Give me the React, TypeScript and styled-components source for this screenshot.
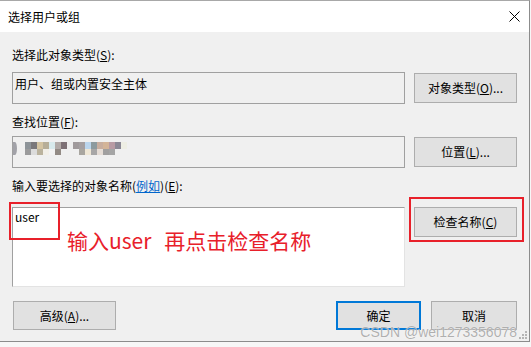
import styled, { createGlobalStyle } from "styled-components";

const GlobalStyle = createGlobalStyle`
  html, body {
    margin: 0;
    padding: 0;
    background: #f7f7f7;
  }
  body {
    font-family: "Noto Sans CJK SC", "Noto Sans", sans-serif;
    font-size: 12px;
    color: #000;
  }
`;

const mosaic = [
  ["#8e9499", "#7a787b", "#d4c4a2", "#b7ae98", "#d8eaec", "#b2aba8", "#7d7075", "#eeeeee", "#a09a9c", "#a5a0a2", "#bbd6ee", "#8c9a9e", "#c8ae9f", "#d3b498", "#b89ba4", "#8b8895", "#eeeee4"],
  ["#9b9b9c", "#dcdcdc", "#bbb39e", "#f2efe8", "#f3f3f3", "#938b85", "#f0f0f0", "#f0f0f0", "#f0f0f0", "#a9a6a0", "#efe7d6", "#a8a7a7", "#e6ddd6", "#a1a0a0", "#a5a5a5", "#f0f0f0", "#f0f0f0"],
];

export default function App() {
  return (
    <>
      <GlobalStyle />
      <Window>
        <TitleBar>
          <span>选择用户或组</span>
          <svg width="11" height="11" viewBox="0 0 11 11">
            <path d="M0.5 0.5 L10.5 10.5 M10.5 0.5 L0.5 10.5" stroke="#000" strokeWidth="1" />
          </svg>
        </TitleBar>
        <Body>
          <Label $gap={9}>
            选择此对象类型(<U>S</U>):
          </Label>
          <Row>
            <TextBox>用户、组或内置安全主体</TextBox>
            <Button>
              对象类型(<U>O</U>)...
            </Button>
          </Row>

          <Label $top={10} $gap={6}>
            查找位置(<U>F</U>):
          </Label>
          <Row>
            <TextBox>
              <Mosaic>
                <MosaicEdge />
                <MosaicGrid>
                  {mosaic.flat().map((c, i) => (
                    <span key={i} style={{ background: c }} />
                  ))}
                </MosaicGrid>
              </Mosaic>
            </TextBox>
            <Button>
              位置(<U>L</U>)...
            </Button>
          </Row>

          <Label $top={10} $gap={13}>
            输入要选择的对象名称(<Link>例如</Link>)(<U>E</U>):
          </Label>
          <Row $top>
            <NameBox>
              user
              <MarkBox $left={-4} $top={-6} $width={51} $height={38} />
              <Hint>
                输入user<HintGap />再点击检查名称
              </Hint>
            </NameBox>
            <Marked>
              <Button>
                检查名称(<U>C</U>)
              </Button>
              <MarkBox $left={-5} $top={-10} $width={115} $height={45} />
            </Marked>
          </Row>

          <Footer>
            <Button $width={103} $height={29} $offset={1}>
              高级(<U>A</U>)...
            </Button>
            <FooterRight>
              <Button $width={85} $height={29} $primary>
                确定
              </Button>
              <Button $width={86} $height={29}>
                取消
              </Button>
            </FooterRight>
          </Footer>
        </Body>
        <Watermark>CSDN @wei1273356078</Watermark>
        <Grip width="9" height="9" viewBox="0 0 9 9">
          {[
            [7, 1],
            [4, 4],
            [7, 4],
            [1, 7],
            [4, 7],
            [7, 7],
          ].map(([x, y]) => (
            <rect key={`${x}-${y}`} x={x} y={y} width="2" height="2" fill="#b4b4b4" />
          ))}
        </Grip>
      </Window>
    </>
  );
}

const Window = styled.div`
  position: relative;
  box-sizing: border-box;
  width: 530px;
  height: 342px;
  display: flex;
  flex-direction: column;
  background: #f0f0f0;
  border-top: 1px solid #a8a8a8;
  border-right: 1px solid #8c8c8c;
  border-bottom: 1px solid #8c8c8c;
`;

const TitleBar = styled.div`
  height: 31px;
  flex-shrink: 0;
  display: flex;
  align-items: center;
  justify-content: space-between;
  padding: 0 9px 0 8px;
  background: #fff;
  line-height: 16px;
`;

const Body = styled.div`
  flex: 1;
  padding: 15px 12px 0 12px;
  display: flex;
  flex-direction: column;
`;

const Label = styled.div<{ $top?: number; $gap: number }>`
  line-height: 16px;
  margin-top: ${(p) => p.$top ?? 0}px;
  margin-bottom: ${(p) => p.$gap}px;
`;

const U = styled.span`
  text-decoration: underline;
`;

const Link = styled.span`
  color: #0066cc;
  text-decoration: underline;
`;

const Row = styled.div<{ $top?: boolean }>`
  display: flex;
  gap: 9px;
  align-items: ${(p) => (p.$top ? "flex-start" : "center")};
`;

const TextBox = styled.div`
  box-sizing: border-box;
  width: 393px;
  height: 32px;
  padding: 3px 2px 0;
  line-height: 16px;
  background: #f0f0f0;
  border: 1px solid #a0a0a0;
`;

const Button = styled.div<{ $width?: number; $height?: number; $primary?: boolean; $offset?: number }>`
  box-sizing: border-box;
  width: ${(p) => p.$width ?? 103}px;
  height: ${(p) => p.$height ?? 30}px;
  margin-left: ${(p) => p.$offset ?? 0}px;
  display: flex;
  align-items: center;
  justify-content: center;
  line-height: 16px;
  background: #e1e1e1;
  border: ${(p) => (p.$primary ? "2px solid #0078d7" : "1px solid #adadad")};
`;

const Mosaic = styled.div`
  display: flex;
  align-items: flex-start;
  padding-top: 2px;
  margin-left: -2px;
`;

const MosaicEdge = styled.div`
  width: 4px;
  height: 13px;
  border-radius: 0 50% 50% 0 / 0 50% 50% 0;
  background: #a2a2a8;
`;

const MosaicGrid = styled.div`
  margin-left: 8px;
  display: grid;
  grid-template-columns: repeat(17, 6px);
  grid-auto-rows: 6.5px;
`;

const NameBox = styled.div`
  position: relative;
  box-sizing: border-box;
  width: 393px;
  height: 80px;
  padding: 1px 2px 0;
  line-height: 16px;
  background: #fff;
  border: 1px solid;
  border-color: #a0a0a0 #e3e3e3 #e3e3e3 #a0a0a0;
`;

const MarkBox = styled.div<{ $left: number; $top: number; $width: number; $height: number }>`
  position: absolute;
  box-sizing: border-box;
  left: ${(p) => p.$left}px;
  top: ${(p) => p.$top}px;
  width: ${(p) => p.$width}px;
  height: ${(p) => p.$height}px;
  border: 2px solid #e8202a;
  pointer-events: none;
`;

const Hint = styled.div`
  position: absolute;
  left: 54px;
  top: 19px;
  display: flex;
  align-items: center;
  font-size: 21px;
  line-height: 26px;
  color: #e8202a;
  white-space: nowrap;
`;

const HintGap = styled.span`
  width: 13px;
`;

const Marked = styled.div`
  position: relative;
`;

const Footer = styled.div`
  margin-top: 14px;
  display: flex;
  justify-content: space-between;
  align-items: center;
`;

const FooterRight = styled.div`
  display: flex;
  gap: 10px;
`;

const Watermark = styled.div`
  position: absolute;
  right: 12px;
  bottom: 1px;
  font-family: "Liberation Sans", Arial, sans-serif;
  font-size: 14px;
  line-height: 16px;
  color: rgba(150, 150, 150, 0.75);
  text-shadow: 0 0 1px #fff;
  white-space: nowrap;
`;

const Grip = styled.svg`
  position: absolute;
  right: 2px;
  bottom: 2px;
`;
